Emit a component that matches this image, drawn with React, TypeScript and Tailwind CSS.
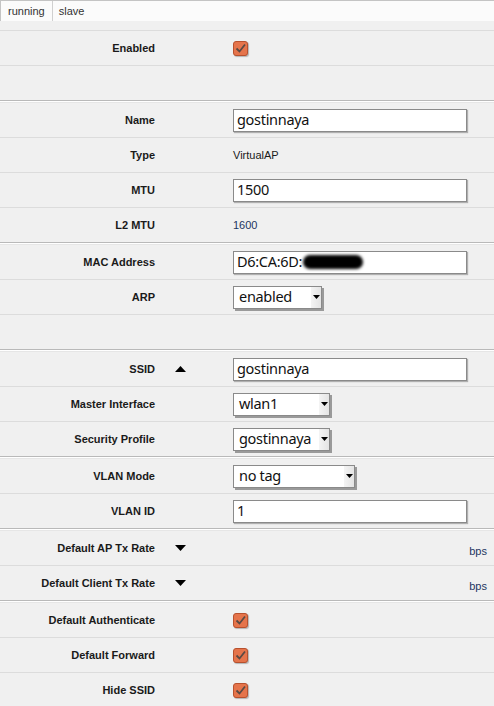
import React from "react";

const font = { fontFamily: '"Liberation Sans", Arial, sans-serif' };

const Check = () => (
  <div className="w-[15px] h-[15px] rounded-[3px] bg-[#e5744b] border border-[#b8512e] shadow-[1px_1px_1px_rgba(0,0,0,0.25)] flex items-center justify-center">
    <svg width="11" height="11" viewBox="0 0 11 11">
      <path d="M1.5 5.5 L4.5 8.5 L10 1.5" fill="none" stroke="#5a4a44" strokeWidth="1.8" />
    </svg>
  </div>
);

const TextInput = ({ value, children }: { value?: string; children?: React.ReactNode }) => (
  <div className="w-[234px] h-[23px] bg-white border border-[#8a8a8a] shadow-[1px_1px_1px_#b0b0b0] flex items-center pl-[3px] text-[14.5px] tracking-[-0.3px] text-[#111] font-['Noto_Sans',sans-serif]">
    {value}
    {children}
  </div>
);

const Select = ({ value, w }: { value: string; w: string }) => (
  <div className={`${w} h-[23px] bg-white border border-[#8a8a8a] shadow-[2px_2px_0_#9a9a9a] flex items-center text-[14.5px] tracking-[-0.3px] text-[#111] font-['Noto_Sans',sans-serif]`}>
    <span className="flex-1 pl-[5px] whitespace-nowrap overflow-hidden">{value}</span>
    <div className="w-[10px] h-full bg-gradient-to-r from-[#f4f4f4] to-[#e4e4e4] flex items-center justify-center">
      <svg width="7" height="4" viewBox="0 0 7 4">
        <path d="M0 0 H7 L3.5 4 Z" fill="#000" />
      </svg>
    </div>
  </div>
);

const Tri = ({ up }: { up?: boolean }) => (
  <svg width="11" height="6" viewBox="0 0 11 6">
    <path d={up ? "M0 6 H11 L5.5 0 Z" : "M0 0 H11 L5.5 6 Z"} fill="#000" />
  </svg>
);

const Row = ({
  label,
  tri,
  children,
  right,
  last,
}: {
  label?: string;
  tri?: "up" | "down";
  children?: React.ReactNode;
  right?: string;
  last?: boolean;
}) => (
  <div className={`flex items-center ${last ? "h-[34px]" : "h-[35px] border-b border-[#dcdcdc]"}`}>
    <div className="w-[155px] text-right font-bold text-[11px] text-[#1a1a1a]">{label}</div>
    <div className="w-[78px] pl-[20px] flex items-center">{tri && <Tri up={tri === "up"} />}</div>
    <div className="flex-1 flex items-center">{children}</div>
    {right && <div className="pr-[7px] text-[11px] text-[#1d3560] pt-[6px]">{right}</div>}
  </div>
);

const Sep = () => <div className="h-[3px] border-t border-b border-t-[#b9b9b9] border-b-[#e6e6e6] bg-white" />;

export default function App() {
  return (
    <div className="w-[494px] h-[706px] bg-[#f0f0f0] overflow-hidden" style={font}>
      <div className="h-[21px] bg-[#fbfbfb] border-t border-l border-[#c4c4c4] flex text-[11px] text-[#333]">
        <div className="px-[7px] flex items-center border-r border-[#d0d0d0]">running</div>
        <div className="px-[6px] flex items-center">slave</div>
      </div>
      <div className="h-[9px]" />
      <div className="border-t border-[#dcdcdc]">
        <Row label="Enabled">
          <Check />
        </Row>
        <Row last />
        <Sep />
        <Row label="Name">
          <TextInput value="gostinnaya" />
        </Row>
        <Row label="Type">
          <span className="text-[11px] text-[#1a1a1a]">VirtualAP</span>
        </Row>
        <Row label="MTU">
          <TextInput value="1500" />
        </Row>
        <Row label="L2 MTU" last>
          <span className="text-[11px] text-[#1d3560]">1600</span>
        </Row>
        <Sep />
        <Row label="MAC Address">
          <TextInput>
            D6:CA:6D:
            <span className="inline-block w-[60px] h-[14px] rounded-full bg-black blur-[1.5px] ml-[1px]" />
          </TextInput>
        </Row>
        <Row label="ARP">
          <Select value="enabled" w="w-[89px]" />
        </Row>
        <Row last />
        <Sep />
        <Row label="SSID" tri="up">
          <TextInput value="gostinnaya" />
        </Row>
        <Row label="Master Interface">
          <Select value="wlan1" w="w-[97px]" />
        </Row>
        <Row label="Security Profile" last>
          <Select value="gostinnaya" w="w-[97px]" />
        </Row>
        <Sep />
        <Row label="VLAN Mode">
          <Select value="no tag" w="w-[122px]" />
        </Row>
        <Row label="VLAN ID" last>
          <TextInput value="1" />
        </Row>
        <Sep />
        <Row label="Default AP Tx Rate" tri="down" right="bps" />
        <Row label="Default Client Tx Rate" tri="down" right="bps" last />
        <Sep />
        <Row label="Default Authenticate">
          <Check />
        </Row>
        <Row label="Default Forward">
          <Check />
        </Row>
        <Row label="Hide SSID">
          <Check />
        </Row>
      </div>
    </div>
  );
}
